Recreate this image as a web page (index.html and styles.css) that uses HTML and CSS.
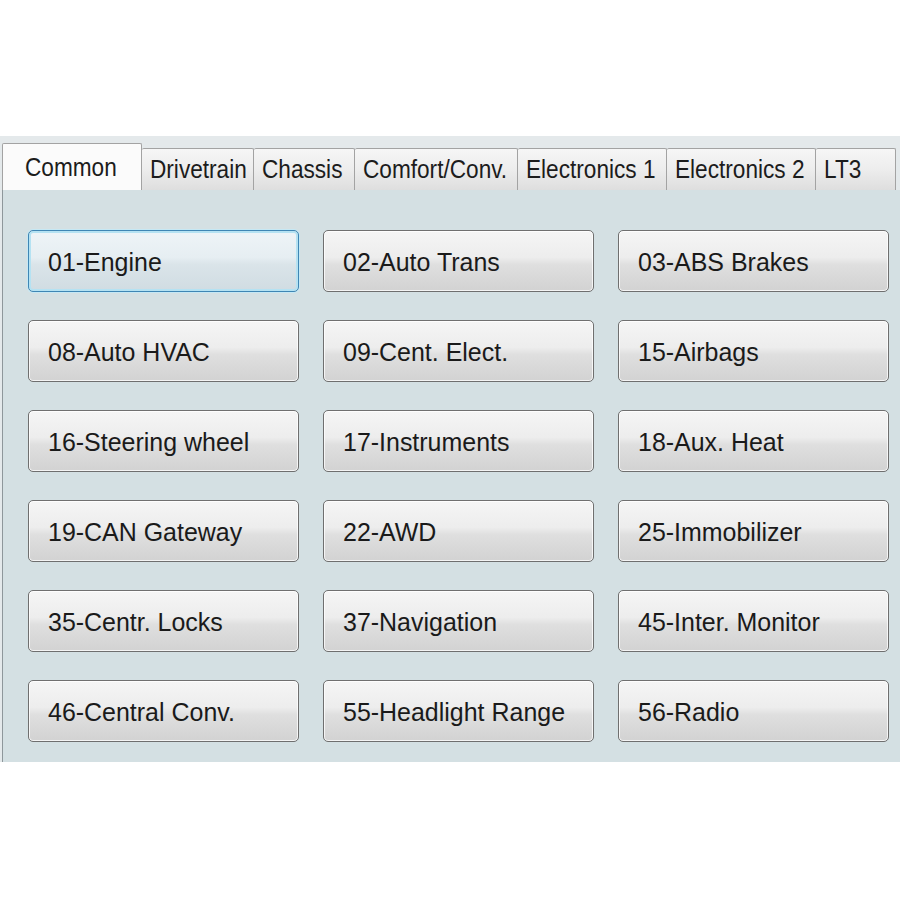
FILE: index.html
```html
<!DOCTYPE html>
<html lang="en">
<head>
    <meta charset="UTF-8">
    <meta name="viewport" content="width=device-width, initial-scale=1.0">
    <title>Control Modules</title>
    <link rel="stylesheet" href="styles.css">
</head>
<body>
    <div class="window">
        <div class="tab-strip">
            <div class="tab tab-active"><span>Common</span></div>
            <div class="tab"><span>Drivetrain</span></div>
            <div class="tab"><span>Chassis</span></div>
            <div class="tab"><span>Comfort/Conv.</span></div>
            <div class="tab"><span>Electronics 1</span></div>
            <div class="tab"><span>Electronics 2</span></div>
            <div class="tab"><span>LT3</span></div>
        </div>

        <div class="tab-panel">
            <div class="module-grid">
                <button class="module-btn focused"><span>01-Engine</span></button>
                <button class="module-btn"><span>02-Auto Trans</span></button>
                <button class="module-btn"><span>03-ABS Brakes</span></button>

                <button class="module-btn"><span>08-Auto HVAC</span></button>
                <button class="module-btn"><span>09-Cent. Elect.</span></button>
                <button class="module-btn"><span>15-Airbags</span></button>

                <button class="module-btn"><span>16-Steering wheel</span></button>
                <button class="module-btn"><span>17-Instruments</span></button>
                <button class="module-btn"><span>18-Aux. Heat</span></button>

                <button class="module-btn"><span>19-CAN Gateway</span></button>
                <button class="module-btn"><span>22-AWD</span></button>
                <button class="module-btn"><span>25-Immobilizer</span></button>

                <button class="module-btn"><span>35-Centr. Locks</span></button>
                <button class="module-btn"><span>37-Navigation</span></button>
                <button class="module-btn"><span>45-Inter. Monitor</span></button>

                <button class="module-btn"><span>46-Central Conv.</span></button>
                <button class="module-btn"><span>55-Headlight Range</span></button>
                <button class="module-btn"><span>56-Radio</span></button>
            </div>
        </div>
    </div>
</body>
</html>
```

FILE: styles.css
```css
body {
    margin: 0;
    background: #fff;
    font-family: "Liberation Sans", Arial, sans-serif;
    color: #1c1c1c;
}

.window {
    margin-top: 136px;
    background: #e4e9eb;
}

/* Tab header row */
.tab-strip {
    display: flex;
    align-items: flex-end;
    height: 54px;
    padding-left: 2px;
}

.tab {
    box-sizing: border-box;
    height: 42px;
    display: flex;
    align-items: center;
    padding-left: 8px;
    font-size: 26px;
    background: linear-gradient(#f6f6f6, #ededed 50%, #dedede);
    border-top: 1px solid #a3a3a3;
    border-right: 1px solid #a3a3a3;
    border-radius: 2px 2px 0 0;
}

.tab span {
    display: inline-block;
    white-space: nowrap;
    transform: scaleX(0.87);
    transform-origin: left center;
}

.tab-active {
    height: 47px;
    padding-left: 22px;
    background: #fbfbfb;
    border-left: 1px solid #a3a3a3;
}

.tab:nth-child(1) { width: 140px; }
.tab:nth-child(2) { width: 112px; }
.tab:nth-child(3) { width: 101px; }
.tab:nth-child(4) { width: 163px; }
.tab:nth-child(5) { width: 149px; }
.tab:nth-child(6) { width: 149px; }
.tab:nth-child(7) { width: 80px; }

/* Panel with module buttons */
.tab-panel {
    box-sizing: border-box;
    height: 572px;
    margin-left: 2px;
    padding: 40px 0 0 25px;
    background: #d4e0e3;
    border-left: 1px solid #8e979b;
}

.module-grid {
    display: grid;
    grid-template-columns: repeat(3, 271px);
    grid-auto-rows: 62px;
    column-gap: 24px;
    row-gap: 28px;
}

.module-btn {
    appearance: none;
    margin: 0;
    padding: 2px 0 0 19px;
    text-align: left;
    font-family: inherit;
    font-size: 26px;
    color: #1a1a1a;
    border: 1px solid #6f6f6f;
    border-radius: 5px;
    background: linear-gradient(#f5f5f5, #ededed 44%, #dfdfdf 56%, #d2d2d2);
    box-shadow: inset 0 0 0 1px rgba(255, 255, 255, 0.75);
    cursor: pointer;
}

.module-btn span {
    display: inline-block;
    white-space: nowrap;
    transform: scaleX(0.96);
    transform-origin: left center;
}

.module-btn:hover {
    background: linear-gradient(#eaf6fd, #d9f0fc 44%, #bee6fd 56%, #a7d9f5);
}

.module-btn.focused {
    border-color: #3f86b4;
    background: linear-gradient(#eef4f7, #e6eef2 44%, #dae4e9 56%, #d0dce2);
    box-shadow: 0 0 0 1px #c6e8f4, inset 0 0 0 2px #b5e2f2;
}
```
